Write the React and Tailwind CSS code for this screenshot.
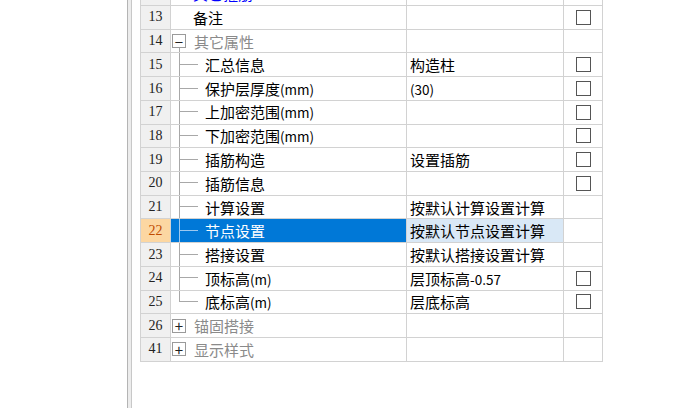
import React from 'react';

const rows = [
  { no: '12', label: '其它箍筋', kind: 'plain', color: 'text-[#0000ff]' },
  { no: '13', label: '备注', kind: 'plain', check: true },
  { no: '14', label: '其它属性', kind: 'group', sign: '−', open: true },
  { no: '15', label: '汇总信息', kind: 'child', value: '构造柱', check: true },
  { no: '16', label: '保护层厚度(mm)', kind: 'child', value: '(30)', check: true },
  { no: '17', label: '上加密范围(mm)', kind: 'child', check: true },
  { no: '18', label: '下加密范围(mm)', kind: 'child', check: true },
  { no: '19', label: '插筋构造', kind: 'child', value: '设置插筋', check: true },
  { no: '20', label: '插筋信息', kind: 'child', check: true },
  { no: '21', label: '计算设置', kind: 'child', value: '按默认计算设置计算' },
  { no: '22', label: '节点设置', kind: 'child', value: '按默认节点设置计算', selected: true },
  { no: '23', label: '搭接设置', kind: 'child', value: '按默认搭接设置计算' },
  { no: '24', label: '顶标高(m)', kind: 'child', value: '层顶标高-0.57', check: true },
  { no: '25', label: '底标高(m)', kind: 'last', value: '层底标高', check: true },
  { no: '26', label: '锚固搭接', kind: 'group', sign: '+' },
  { no: '41', label: '显示样式', kind: 'group', sign: '+' },
];

const cjk = { fontFamily: '"Noto Sans CJK SC", "Noto Sans", sans-serif' };
const serif = { fontFamily: '"Liberation Serif", "DejaVu Serif", serif' };

// latin runs are drawn narrower, like the half-width glyphs in the original grid
function Txt({ text }) {
  const parts = text.split(/([\x20-\x7e]+)/).filter(Boolean);
  return (
    <span>
      {parts.map((p, i) =>
        /^[\x20-\x7e]+$/.test(p) ? (
          <span key={i} className="text-[13.5px]">{p}</span>
        ) : (
          <span key={i}>{p}</span>
        )
      )}
    </span>
  );
}

function TreeCell({ row }) {
  const sel = row.selected;
  const line = sel ? 'border-[#9cc8f0]' : 'border-[#a8a8a8]';

  if (row.kind === 'group') {
    return (
      <div className="flex items-center h-full pl-[1px]">
        <div className="w-[14px] h-full flex flex-col">
          <div className="flex-1" />
          <div className="w-[14px] h-[14px] border border-[#9a9a9a] flex items-center justify-center text-[15px] leading-none text-[#222] bg-white" style={cjk}>
            {row.sign}
          </div>
          <div className={`flex-1 ml-[7px] ${row.open ? 'border-l border-[#a8a8a8]' : ''}`} />
        </div>
        <span className="ml-[8px] text-[#8a8a8a]">{row.label}</span>
      </div>
    );
  }

  if (row.kind === 'plain') {
    return (
      <div className="flex items-center h-full pl-[22px]">
        <span className={row.color || 'text-black'}>{row.label}</span>
      </div>
    );
  }

  return (
    <div className="flex h-full">
      <div className="w-[8px]" />
      <div className={`w-[19px] h-full ${row.kind === 'last' ? '' : 'border-l ' + line}`}>
        <div className={`h-1/2 ${row.kind === 'last' ? 'border-l ' : ''}border-b ${line}`} />
      </div>
      <div className="flex items-center pl-[7px]">
        <span className={sel ? 'text-white' : 'text-black'}>
          <Txt text={row.label} />
        </span>
      </div>
    </div>
  );
}

function Row({ row }) {
  const sel = row.selected;
  return (
    <div className="flex h-[23.73px] text-[15px] leading-none" style={cjk}>
      <div
        className={`w-[30px] shrink-0 border-r border-b border-[#d2d2d2] flex items-center justify-center text-[14px] ${sel ? 'bg-[#fcd7a2] text-[#c04a00]' : 'bg-[#f0f0f0] text-[#222]'}`}
        style={serif}
      >
        {row.no}
      </div>
      <div className={`w-[236px] shrink-0 border-r border-b border-[#d2d2d2] ${sel ? 'bg-[#0078d7]' : 'bg-white'}`}>
        <TreeCell row={row} />
      </div>
      <div className={`w-[157px] shrink-0 border-r border-b border-[#d2d2d2] flex items-center pl-[3px] text-black ${sel ? 'bg-[#d9e8f6]' : 'bg-white'}`}>
        {row.value ? <Txt text={row.value} /> : ''}
      </div>
      <div className="w-[39px] shrink-0 border-r border-b border-[#d2d2d2] flex items-center justify-center bg-white">
        {row.check && <div className="w-[15px] h-[15px] border border-[#555] bg-white" />}
      </div>
    </div>
  );
}

export default function App() {
  return (
    <div className="w-[697px] h-[408px] bg-white flex overflow-hidden">
      <div className="w-[127px] shrink-0" />
      <div className="w-[5px] shrink-0 h-full bg-[#ececec] border-l border-r border-l-[#b4b4b4] border-r-[#c8c8c8]" />
      <div className="w-[8px] shrink-0" />
      <div className="flex flex-col -mt-[17.73px] border-l border-[#d2d2d2] self-start">
        {rows.map(r => (
          <Row key={r.no} row={r} />
        ))}
      </div>
    </div>
  );
}
